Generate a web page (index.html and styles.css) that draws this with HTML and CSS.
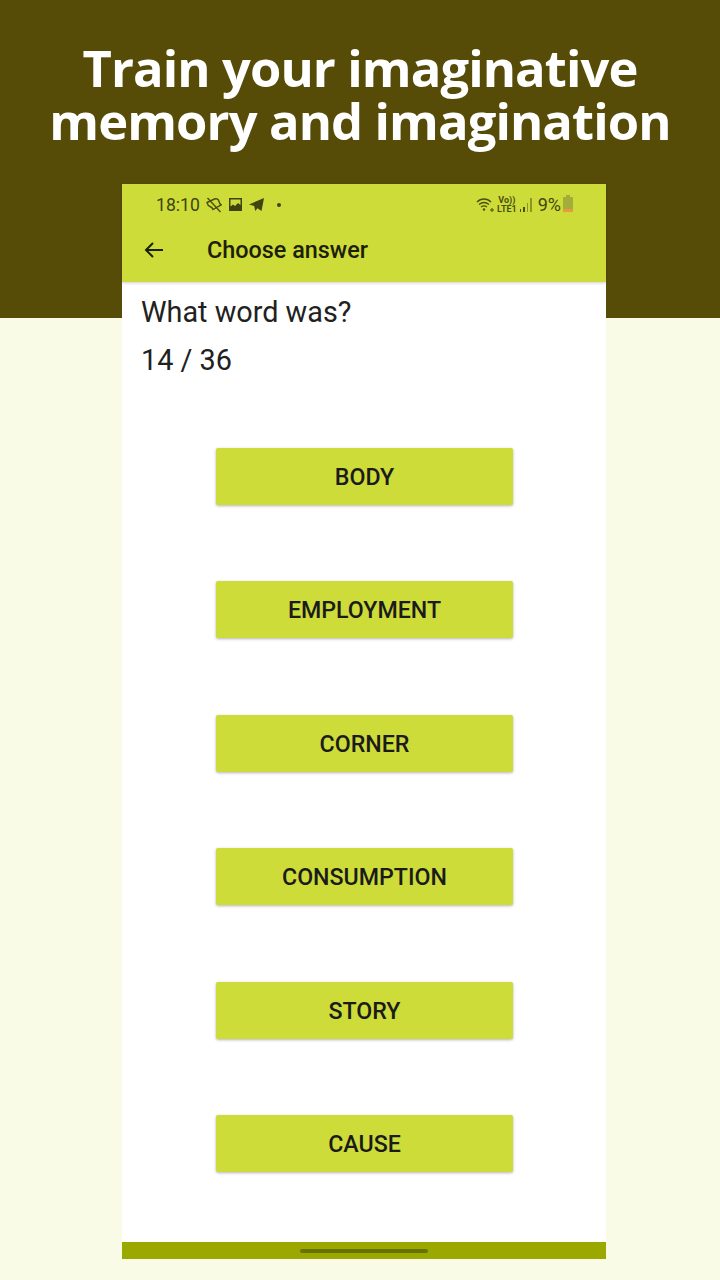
FILE: index.html
```html
<!DOCTYPE html>
<html lang="en">
<head>
    <meta charset="UTF-8">
    <meta name="viewport" content="width=device-width, initial-scale=1.0">
    <title>Train your imaginative memory</title>
    <link rel="stylesheet" href="styles.css">
</head>
<body>
    <header class="banner">
        <h1>Train your imaginative<br>memory and imagination</h1>
    </header>

    <main class="phone">
        <div class="topbar">
            <div class="status">
                <div class="status-left">
                    <span class="clock">18:10</span>
                    <svg class="ic bell" width="16" height="16" viewBox="0 0 16 16" fill="none" stroke="#4a4f10" stroke-width="1.400">
                        <path d="M1 5.500l7.500-3.500c2.500-.8 4 .5 4.500 2.500.3 1.500 1 2.500 2.200 3.300L7 12.500c-.5-1.500-1.500-2.500-3-3-1.500-.5-2.500-2-3-4zM1.500 1l13 14"/>
                    </svg>
                    <svg class="ic" width="15" height="15" viewBox="0 0 15 15">
                        <path fill="#3f4410" d="M1 1h13v13H1z"/>
                        <path fill="#cddc39" d="M2.500 2.500h10v5.500l-2.500-2-3 3-2-1.500-2.500 2z"/>
                    </svg>
                    <svg class="ic" width="17" height="15" viewBox="0 0 17 15">
                        <path fill="#3f4410" d="M1 7.500 16 1l-2.500 13-4-2.800-2.300 2.800-1-5z"/>
                    </svg>
                    <span class="dot"></span>
                </div>
                <div class="status-right">
                    <svg class="wifi" width="20" height="16" viewBox="0 0 20 16" fill="none" stroke="#4a4f10" stroke-width="1.400">
                        <path d="M1 5c4-4 10-4 14 0M3 7.500c3-2.500 7-2.500 10 0M5 10c2-1.500 4-1.500 6 0"/>
                        <circle cx="8" cy="12.500" r="1.200" fill="#4a4f10" stroke="none"/>
                        <path d="M14 13h4M16 11v4" stroke-width="1"/>
                    </svg>
                    <span class="volte">Vo))<br>LTE1</span>
                    <span class="signal">
                        <i class="s1"></i><i class="s2"></i><i class="s3"></i><i class="s4"></i>
                    </span>
                    <span class="percent">9%</span>
                    <span class="battery"><span class="battery-low"></span></span>
                </div>
            </div>
            <div class="toolbar">
                <svg class="back" width="24" height="24" viewBox="0 0 24 24" fill="none" stroke="#1d2008" stroke-width="2">
                    <path d="M21 12H4M11 5l-7 7 7 7"/>
                </svg>
                <span class="toolbar-title">Choose answer</span>
            </div>
        </div>

        <div class="content">
            <p class="question">What word was?</p>
            <p class="counter">14 / 36</p>
            <div class="answers">
                <button class="answer">BODY</button>
                <button class="answer">EMPLOYMENT</button>
                <button class="answer">CORNER</button>
                <button class="answer">CONSUMPTION</button>
                <button class="answer">STORY</button>
                <button class="answer">CAUSE</button>
            </div>
        </div>

        <div class="navbar"><span class="home-pill"></span></div>
    </main>
</body>
</html>
```

FILE: styles.css
```css
* {
    margin: 0;
    padding: 0;
    box-sizing: border-box;
}

body {
    width: 720px;
    height: 1280px;
    overflow: hidden;
    background: #f9fbe7;
    font-family: Roboto, sans-serif;
}

.banner {
    height: 318px;
    padding-top: 41px;
    background: #564c08;
    text-align: center;
}

.banner h1 {
    color: #fff;
    font-family: "Open Sans", sans-serif;
    font-size: 50.700px;
    line-height: 53px;
    font-weight: 700;
    letter-spacing: -0.9px;
}

.phone {
    width: 484px;
    height: 1075px;
    margin: -134px 0 0 122px;
    background: #fff;
    display: flex;
    flex-direction: column;
}

.topbar {
    height: 98px;
    background: #cddc39;
    box-shadow: 0 1px 3px rgba(0, 0, 0, 0.2);
}

.status {
    height: 41px;
    padding: 0 33px 0 34px;
    display: flex;
    justify-content: space-between;
    align-items: center;
}

.status-left,
.status-right {
    display: flex;
    align-items: center;
}

.clock {
    font-size: 17.600px;
    color: #3f4410;
    margin-right: 6px;
}

.ic {
    margin-right: 5px;
}

.bell {
    margin-right: 6px;
}

.dot {
    width: 4px;
    height: 4px;
    margin-left: 7px;
    border-radius: 50%;
    background: #3f4410;
}

.volte {
    font-size: 9px;
    line-height: 9px;
    font-weight: 700;
    color: #4a4f10;
    text-align: center;
    margin-left: 1px;
}

.signal {
    display: flex;
    align-items: flex-end;
    gap: 2px;
    height: 14px;
    margin: 0 6px 0 3px;
}

.signal i {
    width: 1.500px;
    background: #4a4f10;
}

.signal .s1 { height: 3px; }
.signal .s2 { height: 5px; }
.signal .s3 { height: 9px; opacity: 0.5; }
.signal .s4 { height: 14px; opacity: 0.5; }

.percent {
    font-size: 18px;
    color: #3f4410;
    margin-right: 2px;
}

.battery {
    position: relative;
    width: 10px;
    height: 15px;
    background: #a3ad3a;
    border-radius: 1px;
    display: flex;
    align-items: flex-end;
}

.battery::before {
    content: "";
    position: absolute;
    top: -2px;
    left: 3px;
    width: 4px;
    height: 2px;
    background: #a3ad3a;
}

.battery-low {
    width: 100%;
    height: 3px;
    background: #e89a3c;
}

.toolbar {
    height: 50px;
    padding-left: 20px;
    display: flex;
    align-items: center;
}

.toolbar-title {
    margin-left: 41px;
    font-size: 23.400px;
    font-weight: 500;
    color: #1d2008;
}

.content {
    flex: 1;
    padding: 14px 19px 0;
    color: #212121;
}

.question,
.counter {
    font-size: 28.800px;
    line-height: 33px;
}

.counter {
    margin-top: 15px;
}

.answers {
    margin-top: 71px;
    padding-left: 75px;
    display: flex;
    flex-direction: column;
    gap: 76.400px;
}

.answer {
    width: 297px;
    height: 57px;
    padding-top: 1px;
    border: none;
    border-radius: 2px;
    background: #cddc39;
    box-shadow: 0 1px 3px rgba(0, 0, 0, 0.3);
    font-family: Roboto, sans-serif;
    font-size: 23.200px;
    font-weight: 500;
    color: #1b1b1b;
}

.navbar {
    height: 17px;
    background: #9aa800;
    display: flex;
    justify-content: center;
    align-items: center;
}

.home-pill {
    width: 128px;
    height: 4px;
    border-radius: 2px;
    background: #667300;
}
```
